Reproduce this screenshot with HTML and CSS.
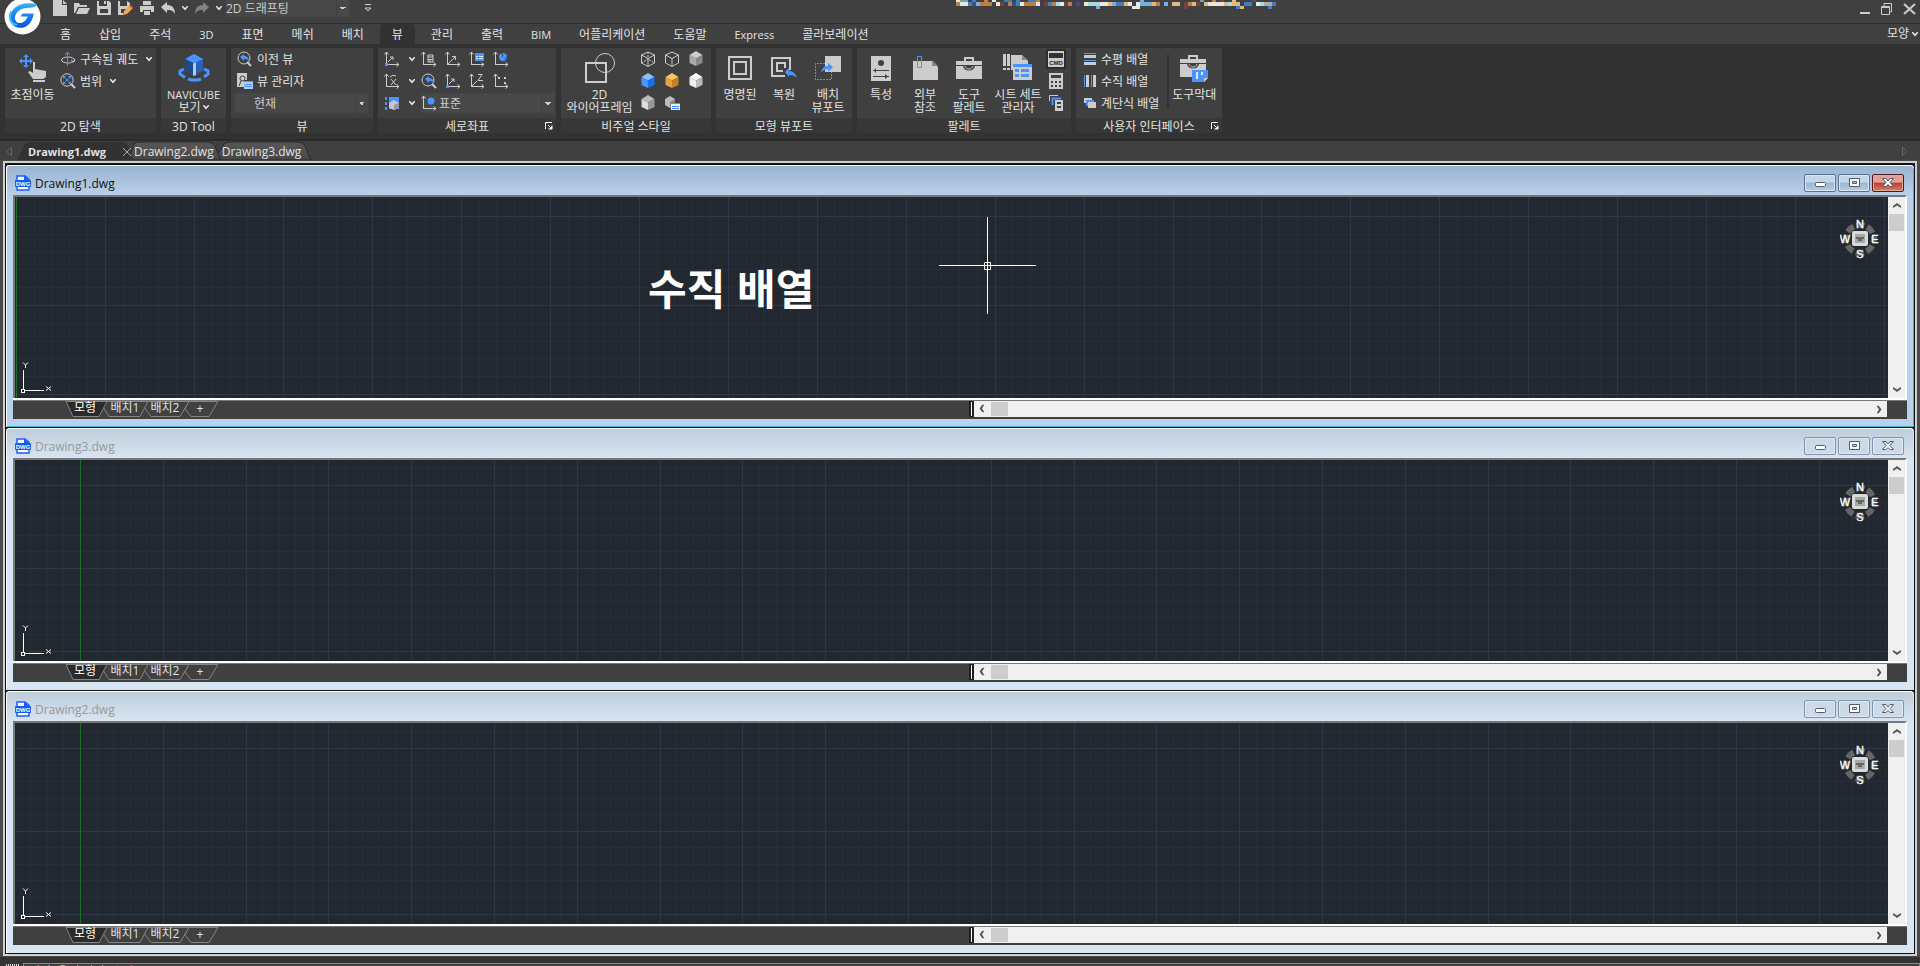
FILE: index.html
```html
<!DOCTYPE html>
<html lang="ko">
<head>
<meta charset="utf-8">
<title>Drawing1.dwg</title>
<link rel="stylesheet" href="styles.css">
</head>
<body>
<svg class="defs" aria-hidden="true">
  <defs>
    <linearGradient id="logoFill" x1="0" y1="0" x2="0" y2="1"><stop offset="0" stop-color="#35b4f5"/><stop offset="1" stop-color="#0a4df0"/></linearGradient>
    <linearGradient id="docFill" x1="0" y1="0" x2="0" y2="1"><stop offset="0" stop-color="#575757"/><stop offset="1" stop-color="#474747"/></linearGradient>
    <symbol id="caret" viewBox="0 0 6 5"><path d="M0 0H1L3 2L5 0H6V1L3 4.500L0 1Z" fill="#e6e6e6"/></symbol>
    <symbol id="axes" viewBox="0 0 16 16"><path d="M2.500 14V1M0.500 3.500L2.500 1L4.500 3.500M2 13.500H15M12.500 11.500L15 13.500L12.500 15.500" fill="none" stroke="#ccc"/></symbol>
    <symbol id="cubeWire" viewBox="0 0 16 16"><path d="M8 1L14.500 4V12L8 15.500L1.500 12V4ZM1.500 4L8 7.500L14.500 4M8 7.500V15" fill="none" stroke="#ccc"/></symbol>
    <symbol id="cubeSolid" viewBox="0 0 16 16"><path d="M8 0L14.500 4L8 7.500L1.500 4Z" fill="var(--top)"/><path d="M1.500 4L8 7.500V15L1.500 12Z" fill="var(--left)"/><path d="M8 7.500L14.500 4V12L8 15Z" fill="var(--right)"/></symbol>
    <symbol id="launch" viewBox="0 0 8 8"><path d="M0.500 7V0.500H7M3 3L7 7M7 3.500V7H3.500" fill="none" stroke="#fff"/><path d="M7 4V7H4Z" fill="#fff"/></symbol>
    <symbol id="toolbox" viewBox="0 0 26 22"><path d="M8 4V0H18V4H26V8H0V4ZM10 4H16V2H10Z" fill="#ccc" fill-rule="evenodd"/><path d="M0 9H7C8 15 18 15 19 9H26V22H0Z" fill="#ccc"/><path d="M9 9C10 13 16 13 17 9" fill="none" stroke="#ccc"/></symbol>
    <symbol id="dwg" viewBox="0 0 16 16"><path d="M2 6V1H10L14 4V6M2 11V15H14V11" fill="#fff" stroke="#1e5cff" stroke-width="1.500"/><path d="M9 0L14 5H9Z" fill="#1e5cff"/><rect y="5" width="16" height="7" rx="1" fill="#1459f5"/><text x="8" y="11" text-anchor="middle" class="dwg-text">DWG</text></symbol>
    <symbol id="compass" viewBox="0 0 40 40">
      <circle cx="20" cy="20" r="14" fill="none" stroke="#666" stroke-width="6" stroke-dasharray="8 3" stroke-dashoffset="4"/>
      <rect x="12" y="12" width="16" height="15" rx="2" fill="#d9dbd9"/><rect x="15" y="15" width="10" height="9" fill="#a5a8a5"/><path d="M16 18H24V20H22V22H18V20H16Z" fill="#666"/>
      <g class="compass-text"><text x="20" y="9">N</text><text x="5" y="24">W</text><text x="35" y="24">E</text><text x="20" y="39">S</text></g>
    </symbol>
    <symbol id="ucs" viewBox="0 0 32 34"><path d="M3.500 9V29M5 29.500H24" stroke="#fff" fill="none"/><rect x="1.500" y="28.500" width="3" height="3" fill="#222830" stroke="#fff"/><path d="M3 1.500L5.500 4L8 1.500M5.500 4V7M26 25.500L31 29.500M31 25.500L26 29.500" stroke="#fff" fill="none"/></symbol>
    <symbol id="chevUp" viewBox="0 0 8 6"><path d="M0 5V3L4 0L8 3V5L4 2.500Z" fill="#555"/></symbol>
    <symbol id="sheetTabs" viewBox="0 0 154 17"><g stroke="#858585"><path d="M123 .5H153L144 15.500H126L120 8Z" fill="#404040"/><path d="M80 .5H124L115 15.500H86L79 6Z" fill="#404040"/><path d="M39 .5H83L75 15.500H44L38 6Z" fill="#404040"/><path d="M1 .5H42L34 15.500H8Z" fill="#2a2a2a"/></g></symbol>
  </defs>
</svg>

<header class="titlebar">
  <svg class="logo" viewBox="0 0 36 36" role="img" aria-label="GstarCAD"><circle cx="18" cy="18" r="17.500" fill="#fff"/><path d="M32 6C24 4 15 5 10 10C4 16 5 25 11 28C19 31 27 27 29 15H18L16 18H23C21 24 15 26 12 23C8 19 13 11 20 10C26 9 30 10 32 6Z" fill="url(#logoFill)"/><path d="M7 13C4 20 7 26 13 26" fill="none" stroke="#27c7ef" stroke-width="2"/></svg>
  <div class="quick">
    <button aria-label="새로 만들기"><svg width="14" height="16"><path d="M0 0H9V5H14V16H0ZM10 0L14 4H10Z" fill="#ccc"/></svg></button>
    <button aria-label="열기"><svg width="16" height="12"><path d="M0 1H5L6 3H13V5H4L1 11H0Z" fill="#ccc"/><path d="M5 6H16L13 12H2Z" fill="#ccc"/></svg></button>
    <button aria-label="저장"><svg width="14" height="14"><path d="M0 0H2V5H10V0H12L14 2V14H0ZM3 8V12H11V8Z" fill="#ccc" fill-rule="evenodd"/><path d="M7 0H9V3H7Z" fill="#ccc"/></svg></button>
    <button aria-label="다른 이름으로 저장"><svg width="15" height="15"><path d="M0 0H2V5H9V0L12 2V5L9 8H3V12H5V14H0Z" fill="#ccc"/><path d="M5 14L6 10L12 4L15 7L9 13Z" fill="#f2aa4e"/><path d="M12 4L15 7L14 8L11 5Z" fill="#ec583e"/></svg></button>
    <button aria-label="인쇄"><svg width="14" height="14"><path d="M3 0H11V4H3ZM0 5H14V11H11V9H3V11H0ZM4 10H10V14H4Z" fill="#ccc"/></svg></button>
    <button aria-label="실행 취소"><svg width="14" height="13"><path d="M0 5L6 0V3C12 3 14 7 14 12C12 8 9 8 6 8V11Z" fill="#ccc"/></svg></button>
    <svg class="caret"><use href="#caret"/></svg>
    <button aria-label="다시 실행"><svg width="14" height="13"><path d="M14 5L8 0V3C2 3 0 7 0 12C2 8 5 8 8 8V11Z" fill="#808080"/></svg></button>
    <svg class="caret"><use href="#caret"/></svg>
    <select class="combo workspace" aria-label="작업공간"><option>2D 드래프팅</option></select>
    <button class="more" aria-label="사용자화"><svg width="6" height="8"><path d="M0 .5H6M0 4H6L3 7Z" stroke="#ccc" fill="none"/></svg></button>
  </div>
  <svg class="mosaic" width="320" height="10" id="mosaic" aria-hidden="true"></svg>
  <div class="sys">
    <button aria-label="최소화"><svg width="10" height="12"><path d="M0 9H10V11H0Z" fill="#ccc"/></svg></button>
    <button aria-label="복원"><svg width="11" height="12"><path d="M.5 3.500H8.500V11.500H.5ZM3 3V.5H10.500V9H9M0 4.500H9" fill="none" stroke="#ccc"/></svg></button>
    <button aria-label="닫기"><svg width="13" height="12"><path d="M1 1L12 11M12 1L1 11" stroke="#ccc" stroke-width="2"/></svg></button>
  </div>
</header>

<nav class="menu" aria-label="리본 탭">
  <button>홈</button><button>삽입</button><button>주석</button><button class="latin">3D</button><button>표면</button><button>메쉬</button><button>배치</button><button class="active">뷰</button><button>관리</button><button>출력</button><button class="latin">BIM</button><button>어플리케이션</button><button>도움말</button><button class="latin">Express</button><button>콜라보레이션</button>
  <button class="look">모양<svg class="caret"><use href="#caret"/></svg></button>
</nav>

<main class="ribbon">
  <section class="panel p-nav">
    <div class="body">
      <button class="big"><span class="pic"><svg width="28" height="28"><path d="M7 0L10 3H8V6H11V4L14 7L11 10V8H8V11H10L7 14L4 11H6V8H3V10L0 7L3 4V6H6V3H4Z" fill="#4a94ff"/><path d="M14 8H16V15L27 17V23L24 25H14L9 18L11 17L14 19Z" fill="#ccc"/><path d="M14 26H26V28H14Z" fill="#ccc"/></svg></span>초점이동</button>
      <div class="rows">
        <button class="row"><svg width="16" height="16"><ellipse cx="8" cy="9" rx="6.500" ry="3" fill="none" stroke="#ccc"/><path d="M7.500 15V1M5 4L7.500 1L10 4" fill="none" stroke="#4a94ff"/><path d="M11 9L14 11L15 8" fill="none" stroke="#ccc"/></svg>구속된 궤도<svg class="caret far"><use href="#caret"/></svg></button>
        <button class="row"><svg width="16" height="16"><circle cx="7" cy="7" r="6.200" fill="none" stroke="#ccc"/><path d="M11 11L15 15" stroke="#ccc" stroke-width="2"/><path d="M4 4L10 10M10 4L4 10" stroke="#4a94ff"/><path d="M3 3H6L3 6ZM11 3V6L8 3ZM3 11V8L6 11ZM11 11H8L11 8Z" fill="#4a94ff"/></svg>범위<svg class="caret far"><use href="#caret"/></svg></button>
      </div>
    </div>
    <h2>2D 탐색</h2>
  </section>

  <section class="panel p-cube">
    <div class="body">
      <button class="big"><span class="pic"><svg width="32" height="28"><path d="M6 15L2 17V20L7 23.500M10 25L14 26H20L23 25M26 23L30 20V17L26 15" fill="none" stroke="#4a94ff" stroke-width="3"/><path d="M7 5L16 0L25 5V16L16 22L7 16Z" fill="#2a61b5"/><path d="M7 5L16 0L25 5L16 9Z" fill="#4a94ff"/><path d="M7 5L15 9V21L7 16Z" fill="#1f4789"/><path d="M15 9L16 9.500L18 8V21L16 22L15 21Z" fill="#a9cdff"/></svg></span><span class="small">NAVICUBE</span><span>보기<svg class="caret"><use href="#caret"/></svg></span></button>
    </div>
    <h2>3D Tool</h2>
  </section>

  <section class="panel p-view">
    <div class="body">
      <div class="rows">
        <button class="row"><svg width="16" height="16"><circle cx="7" cy="7" r="6" fill="none" stroke="#ccc"/><path d="M10 11L14 15" stroke="#ccc" stroke-width="2"/><path d="M3 6L7 3V5C10 5 12 7 12 10C10 8 9 8 7 8V10Z" fill="#4a94ff"/></svg>이전 뷰</button>
        <button class="row"><svg width="16" height="16"><path d="M0 0H10V7H7V14H0Z" fill="#ccc"/><circle cx="5.500" cy="5.500" r="2.500" fill="none" stroke="#404040"/><path d="M2 13L4 8" stroke="#404040"/><path d="M7 8H16V16H7Z" fill="#a9cdff"/><path d="M7 8.500H16M9 11.500H15M9 13.500H15M8 11V14" stroke="#4a94ff"/></svg>뷰 관리자</button>
        <select class="combo view-select" aria-label="현재 뷰"><option>현재</option></select>
      </div>
    </div>
    <h2>뷰</h2>
  </section>

  <section class="panel p-coord">
    <div class="body">
      <div class="coord">
        <div class="line">
          <button aria-label="UCS"><svg width="16" height="16"><use href="#axes"/><path d="M1 12H4V15H1Z" fill="#4a94ff"/><path d="M4 11L9 6M6 6H9V9" stroke="#ccc" fill="none"/></svg></button>
          <svg class="caret"><use href="#caret"/></svg>
          <button aria-label="명명된 UCS"><svg width="16" height="16"><use href="#axes"/><path d="M7 4H12V11H7ZM7 6H12M9 8V11M7 8.500H12" fill="none" stroke="#ccc"/></svg></button>
          <button aria-label="원점"><svg width="16" height="16"><use href="#axes"/><path d="M3 13L10 6M7 5.500H10.500V9" fill="none" stroke="#ccc"/></svg></button>
          <button aria-label="UCS 목록"><svg width="16" height="16"><use href="#axes"/><path d="M6 2H15V10H6Z" fill="#4a94ff"/><path d="M7 5.500H14M7 7.500H14" stroke="#dce9ff" stroke-dasharray="2 1 4 1"/></svg></button>
          <button aria-label="표준 UCS"><svg width="16" height="16"><use href="#axes"/><circle cx="10" cy="6" r="4" fill="#4a94ff"/><path d="M8 2L10 4L9 6M12 9L14 6" stroke="#404040" fill="none"/></svg></button>
        </div>
        <div class="line">
          <button aria-label="X축 회전"><svg width="16" height="16"><use href="#axes"/><path d="M7 6L12 12M12 6L7 12M6 4Q9 1 12 3" fill="none" stroke="#ccc"/></svg></button>
          <svg class="caret"><use href="#caret"/></svg>
          <button aria-label="UCS 이전"><svg width="16" height="16"><circle cx="7" cy="7" r="6" fill="none" stroke="#ccc"/><path d="M11 11L15 15" stroke="#ccc" stroke-width="2"/><path d="M4 6L8 3V5C12 5 13 8 13 10C11 8 10 8 8 8V10Z" fill="#4a94ff"/></svg></button>
          <button aria-label="객체 UCS"><svg width="16" height="16"><use href="#axes"/><path d="M1 12H4V15H1Z" fill="#4a94ff"/><path d="M4 11L9 6M6 6H9V9" stroke="#ccc" fill="none"/></svg></button>
          <button aria-label="Z축 벡터"><svg width="16" height="16"><use href="#axes"/><path d="M3 13L8 8M9 1.500H13L9 7.500H14" fill="none" stroke="#ccc"/></svg></button>
          <button aria-label="3점"><svg width="16" height="16"><use href="#axes"/><path d="M5 4H7V6H5ZM11 4H13V6H11ZM11 9H13V11H11Z" fill="#ccc"/></svg></button>
        </div>
        <div class="line">
          <button aria-label="UCS 아이콘"><svg width="16" height="16"><path d="M1 2H3V5H1ZM1 7H3V10H1ZM1 12H3V15H1ZM5 2H15V14H5Z" fill="#4a94ff"/><path d="M5 8L10 5L15 8V13L10 15L5 13Z" fill="#c6c6c6"/><path d="M10 10L15 8V13L10 15Z" fill="#999"/></svg></button>
          <svg class="caret"><use href="#caret"/></svg>
          <div class="ucs-box"><svg width="16" height="16"><use href="#axes"/><circle cx="10" cy="6" r="3.500" fill="#4a94ff"/></svg><select class="combo" aria-label="UCS 선택"><option>표준</option></select></div>
        </div>
      </div>
    </div>
    <h2>세로좌표<button class="launch" aria-label="세로좌표 옵션"><svg width="8" height="8"><use href="#launch"/></svg></button></h2>
  </section>

  <section class="panel p-style">
    <div class="body">
      <button class="big"><span class="pic"><svg width="32" height="32"><circle cx="21" cy="11" r="9.500" fill="none" stroke="#ccc"/><path d="M2 11H22V30H2Z" fill="none" stroke="#ccc" stroke-width="2"/></svg></span>2D<br>와이어프레임</button>
      <div class="cubes">
        <button aria-label="와이어프레임"><svg width="16" height="16"><use href="#cubeWire"/><path d="M8 1V8M1.500 12L8 8L14.500 12" stroke="#ccc" stroke-dasharray="2 1" fill="none"/></svg></button>
        <button aria-label="숨김"><svg width="16" height="16"><use href="#cubeWire"/></svg></button>
        <button aria-label="음영"><svg class="cube gray"><use href="#cubeSolid"/></svg></button>
        <button aria-label="개념"><svg class="cube blue"><use href="#cubeSolid"/></svg></button>
        <button aria-label="실제"><svg class="cube orange"><use href="#cubeSolid"/></svg></button>
        <button aria-label="모서리 음영"><svg class="cube white"><use href="#cubeSolid"/></svg></button>
        <button aria-label="X레이"><svg class="cube pale"><use href="#cubeSolid"/></svg></button>
        <button aria-label="비주얼 스타일 관리자"><svg width="16" height="16"><path d="M1 4L6 1L11 4V10L6 13L1 10Z" fill="#bbb"/><path d="M6 7L11 4V10L6 13Z" fill="#888"/><path d="M7 8H16V15H7Z" fill="#e2edff"/><path d="M7 8.500H16M8 11.500H15M8 13.500H15" stroke="#4a94ff"/></svg></button>
      </div>
    </div>
    <h2>비주얼 스타일</h2>
  </section>

  <section class="panel p-port">
    <div class="body bigs">
      <button class="big"><span class="pic"><svg width="24" height="24"><path d="M1 1H23V23H1Z M6 6H18V18H6Z" fill="none" stroke="#ccc" stroke-width="2"/></svg></span>명명된</button>
      <button class="big"><span class="pic"><svg width="26" height="22"><path d="M19 13V1H1V19H14M14 11V6H6V14H12" fill="none" stroke="#ccc" stroke-width="2"/><path d="M14 15L18 11V14C22 14 25 17 26 21C23 18 21 18 18 18V20Z" fill="#4a94ff"/></svg></span>복원</button>
      <button class="big"><span class="pic"><svg width="26" height="24"><path d="M10 0H26V16H10Z" fill="#ccc"/><path d="M10 7.500H.5V23.500H16.500V16" fill="none" stroke="#4a94ff" stroke-dasharray="2 1"/><path d="M18 11L13 7V10C9 10 7 12 6 16C9 14 11 13 13 13V16Z" fill="#4a94ff"/></svg></span>배치<br>뷰포트</button>
    </div>
    <h2>모형 뷰포트</h2>
  </section>

  <section class="panel p-palette">
    <div class="body bigs">
      <button class="big"><span class="pic"><svg width="20" height="25"><path d="M0 0H20V25H0Z" fill="#ccc"/><circle cx="10" cy="7" r="3" fill="#404040"/><path d="M2 14.500H18M2 20.500H18" stroke="#404040"/><path d="M5 12V17L3 14.500ZM14 18V23L17 20.500Z" fill="#404040"/></svg></span>특성</button>
      <button class="big"><span class="pic"><svg width="26" height="24"><path d="M1 5H20L26 11V24H1Z" fill="#ccc"/><path d="M20 4V10H26Z" fill="#888"/><path d="M5.500 3V11.500H9.500V.5H5.500V8" fill="none" stroke="#4a94ff"/></svg></span>외부<br>참조</button>
      <button class="big"><span class="pic"><svg width="26" height="22"><use href="#toolbox"/></svg></span>도구<br>팔레트</button>
      <button class="big wide"><span class="pic"><svg width="30" height="28"><path d="M0 0H3V12H0ZM4 0H7V12H4ZM0 14H3V16H0ZM4 14H7V16H4ZM8 1H19L25 7V10H10V16H8Z" fill="#ccc"/><path d="M19 1V6H25Z" fill="#888"/><path d="M10 10H29V26H10Z" fill="#ccc"/><path d="M10 10H29V13H10ZM12 15H16V18H12ZM18 15H26V18H18ZM12 20H16V23H12ZM18 20H26V23H18Z" fill="#4a94ff"/></svg></span>시트 세트<br>관리자</button>
      <div class="stack">
        <button class="pressed" aria-label="명령행"><svg width="16" height="16"><path d="M0 0H16V16H0Z" fill="#ccc"/><path d="M1 2H15V7H1Z" fill="#333"/><text x="8" y="14" text-anchor="middle" class="cmd-text">CMD</text></svg></button>
        <button aria-label="계산기"><svg width="14" height="16"><path d="M0 0H14V16H0Z" fill="#ccc"/><path d="M2 2H12V5H2Z" fill="#404040"/><path d="M2 9H12M2 13H12" stroke="#404040" stroke-width="2" stroke-dasharray="2 2"/></svg></button>
        <button aria-label="시트"><svg width="15" height="16"><path d="M.5 6V.5H9" fill="none" stroke="#ccc"/><path d="M3.500 10V3.500H12" fill="none" stroke="#4a94ff" stroke-width="2"/><path d="M6 5H14V16H6Z" fill="#ccc"/><path d="M8 7H12V9H8ZM8 11H12V13H8Z" fill="#404040"/></svg></button>
      </div>
    </div>
    <h2>팔레트</h2>
  </section>

  <section class="panel p-ui">
    <div class="body">
      <div class="rows">
        <button class="row"><svg width="12" height="12"><path d="M0 .5H12M0 7.500H12" stroke="#4a94ff"/><path d="M0 3.500H12M0 10.500H12" stroke="#ccc" stroke-width="3"/></svg>수평 배열</button>
        <button class="row"><svg width="12" height="12"><path d="M.5 0V12M7.500 0V12" stroke="#4a94ff"/><path d="M3.500 0V12M10.500 0V12" stroke="#ccc" stroke-width="3"/></svg>수직 배열</button>
        <button class="row"><svg width="12" height="12"><path d="M0 1H8V6H0Z" fill="#ccc"/><path d="M2 3H10V9H2Z" fill="#4a94ff"/><path d="M4 5H12V11H4Z" fill="#ccc"/></svg>계단식 배열</button>
      </div>
      <span class="divider"></span>
      <button class="big"><span class="pic"><svg width="28" height="28"><svg width="26" height="24" preserveAspectRatio="none"><use href="#toolbox"/></svg><path d="M12 16H28V24L24 28H12Z" fill="#4a94ff"/><path d="M24 28V24H28Z" fill="#ccc"/><path d="M16 18H18V25H16ZM21 18H23V21H21Z" fill="#dce9ff"/></svg></span>도구막대</button>
    </div>
    <h2>사용자 인터페이스<button class="launch" aria-label="인터페이스 옵션"><svg width="8" height="8"><use href="#launch"/></svg></button></h2>
  </section>
</main>

<nav class="docs" aria-label="열린 도면">
  <svg class="docs-shape" width="320" height="19" aria-hidden="true"><path d="M214 19L224 3Q226 1 230 1H298Q303 1 305 5L311 19Z" fill="url(#docFill)" stroke="#282828"/><path d="M128 19L134 3Q136 1 140 1H208Q213 1 215 5L221 19Z" fill="url(#docFill)" stroke="#282828"/><path d="M17 19L24 4Q26 1 30 1H122Q126 1 128 5L133 19Z" fill="#323232"/></svg>
  <svg class="docs-prev" width="6" height="9"><path d="M5.500 .5V8.500L.5 4.500Z" fill="none" stroke="#666"/></svg>
  <button class="doc current">Drawing1.dwg</button><button class="doc-close" aria-label="닫기"><svg width="8" height="8"><path d="M0 0L8 8M8 0L0 8" stroke="#aaa"/></svg></button>
  <button class="doc">Drawing2.dwg</button>
  <button class="doc">Drawing3.dwg</button>
  <svg class="docs-next" width="6" height="9"><path d="M.5 .5V8.500L5 4.500Z" fill="none" stroke="#666"/></svg>
</nav>

<div class="mdi" id="mdi">
  <template id="windowTemplate">
    <section class="window">
      <header class="wtitle">
        <svg width="16" height="16"><use href="#dwg"/></svg><span class="wname"></span>
        <div class="wbtns">
          <button aria-label="최소화"><svg width="11" height="10"><rect x=".5" y="4.500" width="10" height="4" rx="1" fill="#fff" stroke="#555a70"/></svg></button>
          <button aria-label="최대화"><svg width="11" height="10"><path d="M.5 .5H10.500V8.500H.5ZM3.500 3.500H7.500V5.500H3.500Z" fill="#fff" fill-rule="evenodd" stroke="#555a70"/></svg></button>
          <button class="wclose" aria-label="닫기"><svg width="12" height="10"><path d="M.5 .5H4L6 3L8 .5H11.500L8 4.500L11.500 8.500H8L6 6.500L4 8.500H.5L4 4.500Z" fill="#fff" stroke="#555a70"/></svg></button>
        </div>
      </header>
      <div class="view">
        <div class="paper">
          <svg class="grid" width="100%" height="100%"></svg>
          <svg class="ucs" width="32" height="34"><use href="#ucs"/></svg>
          <svg class="compass" width="40" height="40"><use href="#compass"/></svg>
        </div>
        <div class="vscroll"><button aria-label="위로"><svg width="8" height="6"><use href="#chevUp"/></svg></button><span class="thumb"></span><button class="end" aria-label="아래로"><svg width="8" height="6"><use href="#chevUp"/></svg></button></div>
      </div>
      <footer class="wfoot">
        <nav class="sheets"><svg class="sheets-shape" width="154" height="17"><use href="#sheetTabs"/></svg><button class="on">모형</button><button>배치1</button><button>배치2</button><button>+</button></nav>
        <span class="splitter"></span>
        <div class="hscroll"><button class="left" aria-label="왼쪽으로"><svg width="8" height="6"><use href="#chevUp"/></svg></button><span class="thumb"></span><button class="right" aria-label="오른쪽으로"><svg width="8" height="6"><use href="#chevUp"/></svg></button></div>
      </footer>
    </section>
  </template>
</div>

<div class="command"><span class="grip"></span><input class="prompt" aria-label="명령" value="명령: 옵션 입력 [수직]:"></div>
<script src="script.js"></script>
</body>
</html>
```
FILE: styles.css
```css
* { box-sizing: border-box; }
body {
  margin: 0;
  height: 100vh;
  overflow: hidden;
  display: flex;
  flex-direction: column;
  background: #404040;
  color: #e2e2e2;
  font: 12px/13px "Open Sans", "Noto Sans CJK KR", sans-serif;
}
button {
  margin: 0;
  padding: 0;
  border: 0;
  background: none;
  color: inherit;
  font: inherit;
  white-space: nowrap;
}
svg { display: block; flex: none; }
.defs { position: absolute; width: 0; height: 0; }
.caret { width: 6px; height: 5px; }
.dwg-text { font: bold 6px "Liberation Sans", sans-serif; fill: #fff; }
.cmd-text { font: bold 6px "Liberation Sans", sans-serif; fill: #222; }
.compass-text { font: 11px "Liberation Sans", sans-serif; fill: #fff; stroke: #fff; stroke-width: 0.3; text-anchor: middle; }

.combo {
  appearance: none;
  height: 20px;
  margin: 0;
  padding: 0;
  border: 0;
  border-radius: 0;
  color: #ccc;
  font: inherit;
  background:
    linear-gradient(to top right, transparent 50%, #ccc 0) right 6px center / 3px 3px no-repeat,
    linear-gradient(to top left, transparent 50%, #ccc 0) right 3px center / 3px 3px no-repeat,
    linear-gradient(#404040, #404040) right 12px center / 1px 100% no-repeat,
    #484848;
}

/* Title bar */
.titlebar { position: relative; height: 24px; flex: none; border-bottom: 1px solid #2e2e2e; }
.logo { position: absolute; z-index: 1; left: 4px; top: -2px; width: 37px; height: 37px; }
.quick { display: flex; align-items: center; gap: 7px; height: 16px; padding-left: 53px; }
.quick .workspace { width: 123px; height: 18px; margin-left: -3px; }
.more { margin-left: 9px; }
.mosaic { position: absolute; left: 49.800%; top: 0; }
.sys { position: absolute; right: 4px; top: 3px; display: flex; gap: 11px; }

/* Ribbon tabs */
.menu { height: 20px; flex: none; display: flex; gap: 4px; padding: 0 6px 0 48px; }
.menu button { padding: 0 12px; height: 20px; line-height: 22px; }
.menu .latin { font-size: 11px; }
.menu .active { background: #323232; border-radius: 4px 4px 0 0; }
.menu .look { margin-left: auto; padding: 0; display: flex; align-items: center; gap: 3px; line-height: 18px; }
.menu .look .caret { margin-right: -4px; }

/* Ribbon */
.ribbon {
  flex: none;
  height: 97px;
  display: flex;
  gap: 5px;
  padding: 4px 5px 6px;
  background: #323232;
  border-bottom: 2px solid #2b2b2b;
}
.panel { display: flex; flex-direction: column; flex: none; }
.panel .body { display: flex; height: 72px; background: #404040; }
.panel h2 {
  position: relative;
  margin: 0;
  height: 15px;
  background: #373737;
  font: inherit;
  line-height: 17px;
  text-align: center;
}
.launch { position: absolute; right: 3px; top: 4px; }
.big { align-self: flex-start; text-align: center; line-height: 13px; }
.big span { display: flex; align-items: center; justify-content: center; gap: 2px; }
.big .pic { height: 40px; }
.big .small { font-size: 11px; }
.rows { display: flex; flex-direction: column; }
.row { display: flex; align-items: center; gap: 4px; height: 22px; }
.row .far { margin-left: 4px; }

.p-nav { width: 151px; }
.p-nav .big { width: 55px; }
.p-cube { width: 65px; }
.p-cube .big { width: 100%; }
.p-view { width: 142px; }
.p-view .rows { padding-left: 6px; }
.p-view .view-select { width: 133px; padding-left: 19px; margin: 1px 0 0 -2px; }
.p-coord { width: 178px; }
.coord { padding-left: 6px; }
.line { display: flex; align-items: center; gap: 8px; height: 22px; }
.line > .caret { margin: 0 -2px 0 1px; }
.ucs-box { display: flex; align-items: center; gap: 2px; height: 20px; background: #484848; }
.ucs-box .combo { width: 115px; }
.p-style { width: 150px; }
.p-style .big { width: 77px; }
.cubes { display: grid; grid-template-columns: repeat(3, 16px); grid-auto-rows: 22px; column-gap: 8px; padding-left: 2px; align-items: center; }
.cube { width: 16px; height: 16px; }
.gray { --top: #ccc; --left: #aaa; --right: #888; }
.blue { --top: #8fbcff; --left: #4a94ff; --right: #1470f5; }
.orange { --top: #ffc364; --left: #e8a140; --right: #c98022; }
.white { --top: #fff; --left: #eee; --right: #bbb; }
.pale { --top: #bbb; --left: #ddd; --right: #999; }
.p-port { width: 136px; }
.bigs .big { width: 44px; }
.p-port .bigs { padding-left: 2px; }
.p-palette { width: 214px; }
.p-palette .bigs { padding-left: 2px; }
.bigs .wide { width: 54px; }
.stack { display: grid; grid-auto-rows: 22px; width: 22px; justify-items: center; align-items: center; }
.pressed { padding: 2px; background: #2c2c2c; }
.p-ui { width: 146px; }
.p-ui .rows { padding-left: 8px; }
.p-ui .row { gap: 5px; }
.divider { width: 2px; margin: 6px 0 10px 8px; background: #333; }
.p-ui .big { width: 50px; }

/* Drawing tabs */
.docs { position: relative; flex: none; height: 19px; display: flex; align-items: center; padding: 2px 12px 0 6px; }
.docs > * { position: relative; }
.docs > .docs-shape { position: absolute; left: 0; top: 0; }
.docs .doc { margin-right: 8px; }
.docs .current { font-size: 11px; font-weight: 700; margin: 0 17px 0 16px; }
.doc-close { margin-right: 3px; }
.docs-next { margin-left: auto; }

/* Window area */
.mdi {
  flex: 1;
  min-height: 0;
  display: grid;
  grid-auto-rows: 1fr;
  gap: 1px;
  padding: 4px 3px 3px;
  background: #111;
  border: solid #4a4a4a;
  border-width: 1px 3px;
  box-shadow: inset 0 0 0 2px #d0d0d0;
}
.window {
  display: flex;
  flex-direction: column;
  min-height: 0;
  padding: 0 7px 8px;
  background: #d8e5f2;
  border-radius: 4px 4px 0 0;
  box-shadow: inset 0 1px #fff, inset 1px 0 #fff;
}
.wtitle {
  flex: none;
  display: flex;
  align-items: center;
  gap: 4px;
  height: 30px;
  margin: 1px -6px -1px;
  padding: 4px 9px 0 8px;
  background: linear-gradient(#bfcddb, #d8e5f2);
  border-radius: 4px 4px 0 0;
  color: #999;
}
.wbtns { display: flex; gap: 2px; margin-left: auto; }
.wbtns button {
  display: flex;
  align-items: center;
  justify-content: center;
  width: 32px;
  height: 18px;
  border: 1px solid #8492ad;
  border-radius: 2px;
  background: #cbd9e8;
  box-shadow: inset 0 0 0 1px #dde7f2;
}
.front { background: #bad1ea; box-shadow: inset 0 1px #fff, inset 1px 0 #fff, inset -1px -1px #35b6d2; }
.front .wtitle { background: linear-gradient(#9ab3d0, #b9d1ea); color: #111; }
.front .wbtns button { border-color: #5b6f8c; background: linear-gradient(#c3d6ea 45%, #9cb6d2 50%, #b4cce4); }
.front .wbtns .wclose { border-color: #521820; background: linear-gradient(#e3a198 45%, #bd3f2a 50%, #d98064); box-shadow: inset 0 0 0 1px #e5a79a; }
.view {
  flex: 1;
  min-height: 0;
  display: flex;
  border: solid #777;
  border-width: 2px 0 0 2px;
  border-right: 2px solid #fff;
}
.paper { position: relative; flex: 1; background: #222830; overflow: hidden; }
.grid { position: absolute; inset: 0; }
.ucs { position: absolute; left: 5px; bottom: 3px; }
.compass { position: absolute; right: 8px; top: 22px; }
.caption {
  position: absolute;
  left: 33.800%;
  top: 60px;
  margin: 0;
  color: #fff;
  font: bold 42px/60px "Noto Sans CJK KR", sans-serif;
}
.crosshair { position: absolute; left: 49.350%; top: 20px; }
.vscroll { display: flex; flex-direction: column; align-items: center; width: 17px; background: #f0f0f0; }
.vscroll button { display: flex; align-items: center; justify-content: center; height: 17px; }
.vscroll .thumb { width: 15px; height: 17px; background: #cdcdcd; }
.vscroll .end { margin-top: auto; transform: rotate(180deg); }
.wfoot { flex: none; display: flex; height: 21px; padding-right: 20px; background: #404040; border-top: 2px solid #fff; box-shadow: inset 0 1px #777; }
.sheets { position: relative; flex: 904; display: flex; padding: 1px 0 0 52px; }
.sheets-shape { position: absolute; left: 52px; top: 1px; }
.sheets button { position: relative; width: 40px; height: 14px; line-height: 14px; }
.sheets button:last-child { width: 30px; line-height: 16px; }
.sheets .on { color: #fff; }
.splitter { width: 5px; height: 16px; margin-top: 1px; border: solid #222; border-width: 1px 2px; background: #fff; }
.hscroll { flex: 913; display: flex; align-items: center; height: 16px; margin-top: 1px; background: #f0f0f0; }
.hscroll button { display: flex; align-items: center; justify-content: center; width: 17px; height: 16px; }
.hscroll .left { transform: rotate(-90deg); }
.hscroll .right { margin-left: auto; transform: rotate(90deg); }
.hscroll .thumb { width: 17px; height: 14px; background: #cdcdcd; }

/* Command line */
.command { flex: none; height: 9px; display: flex; padding: 6px 0 0 6px; gap: 4px; background: #333; overflow: hidden; }
.grip { width: 13px; height: 2px; margin-top: 1px; background: repeating-linear-gradient(90deg, #ddd 0 1px, #333 1px 2px); }
.prompt { flex: 1; height: 15px; padding: 0 5px; border: 1px solid #888; background: #404040; color: #ddd; font: inherit; line-height: 12px; }
```
FILE: script.js
```js
const SVG = "http://www.w3.org/2000/svg";

function rect(svg, x, y, w, h, fill) {
  const r = document.createElementNS(SVG, "rect");
  r.setAttribute("x", x);
  r.setAttribute("y", y);
  r.setAttribute("width", w);
  r.setAttribute("height", h);
  r.setAttribute("fill", fill);
  svg.appendChild(r);
}

/* Drawing windows: x0/y0 is a major grid crossing, step the major spacing. */
const drawings = [
  { name: "Drawing1.dwg", x0: 90, y0: 19, step: 88.96, axis: 1, caption: "수직 배열" },
  { name: "Drawing3.dwg", x0: 65, y0: 25, step: 82.8, axis: 65 },
  { name: "Drawing2.dwg", x0: 65, y0: 25, step: 82.8, axis: 65 }
];

const mdi = document.getElementById("mdi");
const template = document.getElementById("windowTemplate");

function drawGrid(svg, d) {
  const w = svg.clientWidth || svg.parentNode.clientWidth;
  const h = svg.clientHeight || svg.parentNode.clientHeight;
  for (const major of [false, true]) {
    const color = major ? "#2f364a" : "#272e38";
    for (let i = -10; i < 130; i++) {
      if ((i % 5 === 0) !== major) continue;
      const x = Math.round(d.x0 + i * d.step / 5);
      const y = Math.round(d.y0 + i * d.step / 5);
      if (x >= 0 && x < w) rect(svg, x, 0, 1, h, color);
      if (y >= 0 && y < h) rect(svg, 0, y, w, 1, color);
    }
  }
  rect(svg, d.axis, 0, 1, h, "#1f6b28");
}

drawings.forEach((d) => {
  const win = template.content.cloneNode(true).firstElementChild;
  win.querySelector(".wname").textContent = d.name;
  mdi.appendChild(win);
  if (d.caption) {
    win.classList.add("front");
    const paper = win.querySelector(".paper");
    const p = document.createElement("p");
    p.className = "caption";
    p.textContent = d.caption;
    paper.appendChild(p);
    const c = document.createElementNS(SVG, "svg");
    c.setAttribute("class", "crosshair");
    c.setAttribute("width", 97);
    c.setAttribute("height", 97);
    c.innerHTML = '<path d="M0 48.500H97M48.500 0V97M45.500 45.500H51.500V52.500H45.500Z" fill="none" stroke="#fff"/>';
    paper.appendChild(c);
  }
});
document.querySelectorAll(".grid").forEach((svg, i) => drawGrid(svg, drawings[i]));

/* Colour cells along the top edge of the title bar, 4px wide. */
const colors = { o: "#b97f45", w: "#e8e8e0", b: "#3f7fbf", n: "#434a8a", s: "#76b0e0", m: "#753f3f", c: "#a8dcdc", t: "#dfb980", g: "#aaaaaa", k: "#6aa8a8" };
const cells = [
  "wkk.b..o.w..bb.b..bbo.........................s..............k..o.m..t....n",
  "owwbnsooo.wm.onbwooow.mbocwmo.n.wcccwwtsbbtw.wsssto.s.tt.motm.twwwwtctt.bb.wcggbb",
  "...................................s........ww...........m............bt......b"
];
const mosaic = document.getElementById("mosaic");
[[0, 2], [2, 4], [6, 3]].forEach(([y, h], row) => {
  [...cells[row]].forEach((k, i) => {
    if (colors[k]) rect(mosaic, i * 4, y, 4, h, colors[k]);
  });
});
```
